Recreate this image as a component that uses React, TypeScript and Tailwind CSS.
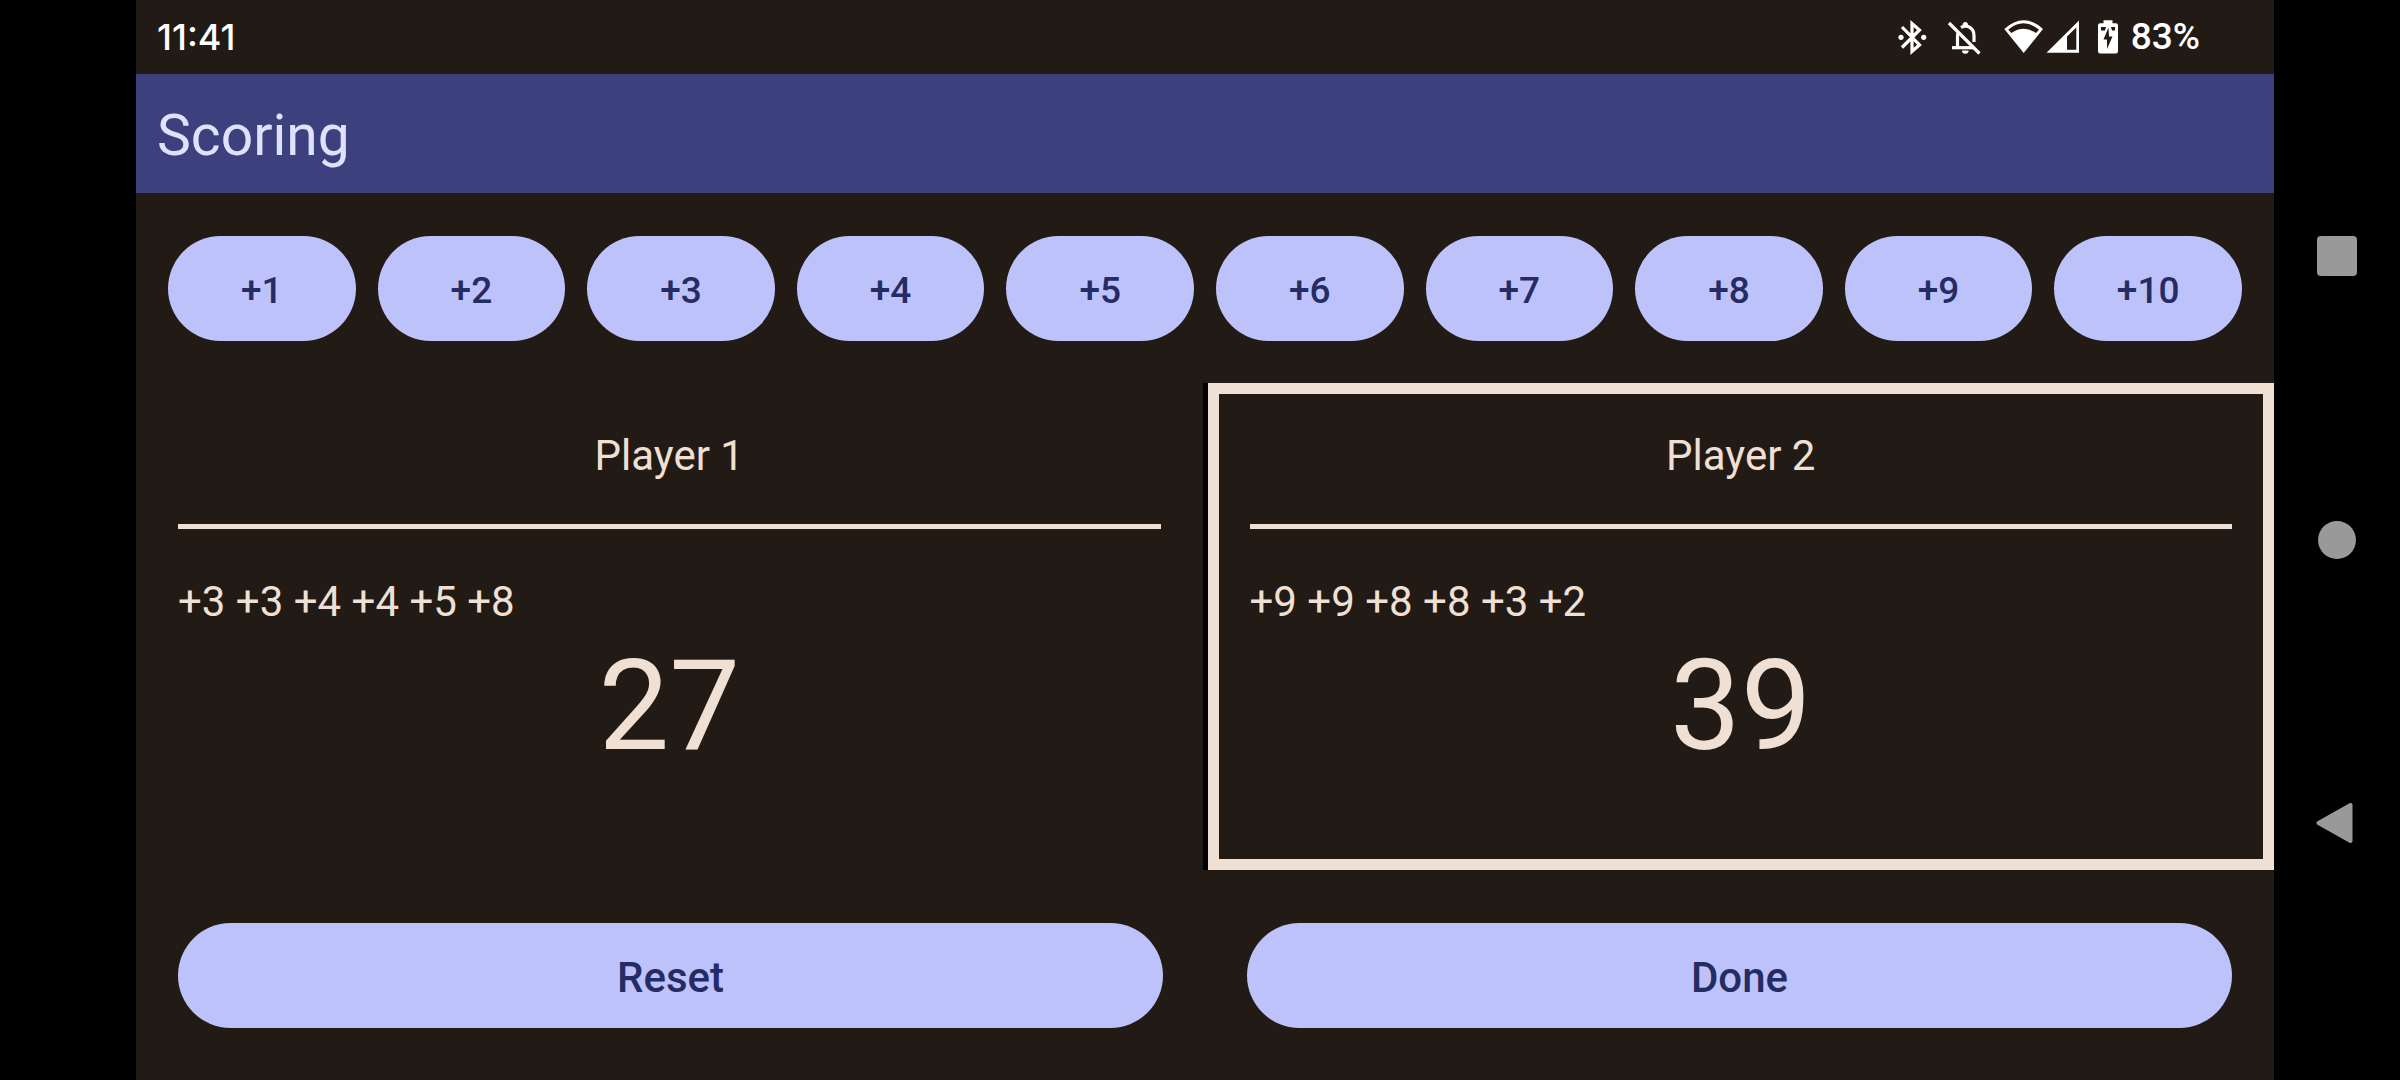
const increments = [1, 2, 3, 4, 5, 6, 7, 8, 9, 10];

const players = [
  { name: "Player 1", history: [3, 3, 4, 4, 5, 8], total: 27, active: false },
  { name: "Player 2", history: [9, 9, 8, 8, 3, 2], total: 39, active: true },
];

function BluetoothIcon() {
  return (
    <svg width="34" height="38" viewBox="0 0 34 38" fill="none" aria-hidden="true">
      <path d="M6 9 23.5 26.8 16 33.5V5.5L23.5 12 6 29.5" stroke="#fff" strokeWidth="3.2" />
      <circle cx="5" cy="19.3" r="2.6" fill="#fff" />
      <circle cx="27.7" cy="19.3" r="2.6" fill="#fff" />
    </svg>
  );
}

function BellOffIcon() {
  return (
    <svg width="36" height="38" viewBox="0 0 36 38" fill="none" aria-hidden="true">
      <g stroke="#fff" strokeWidth="3.2">
        <path d="M3 5 33.5 35.5" />
        <path d="M6 29.7H27" />
        <path d="M11.5 29V18Q11.5 15.5 12.5 14" />
        <path d="M15 9.5C21 6 28 10 28 17.5V24" />
      </g>
      <circle cx="19.3" cy="6.5" r="2.6" fill="#fff" />
      <path d="M16 32.5h6.6a3.3 3.3 0 0 1-6.6 0z" fill="#fff" />
    </svg>
  );
}

function WifiIcon() {
  return (
    <svg width="43" height="38" viewBox="0 0 43 38" aria-hidden="true">
      <path
        fill="#fff"
        fillRule="evenodd"
        d="M2.3 11Q21.7-6.5 41 11L21.7 35ZM6.3 11.7 9.3 15Q21.7 6.4 34 15L37 11.7Q21.7-1 6.3 11.7Z"
      />
    </svg>
  );
}

function SignalIcon() {
  return (
    <svg width="36" height="38" viewBox="0 0 36 38" aria-hidden="true">
      <path
        fill="#fff"
        fillRule="evenodd"
        d="M1.5 34.7H34V2.5ZM22 31.8V18.5L31.3 9.5V31.8Z"
      />
    </svg>
  );
}

function BatteryIcon() {
  return (
    <svg width="22" height="38" viewBox="0 0 22 38" aria-hidden="true">
      <path
        fill="#fff"
        d="M6.5 2.3h9v3H19a2 2 0 0 1 2 2v26.2a2 2 0 0 1-2 2H3a2 2 0 0 1-2-2V7.3a2 2 0 0 1 2-2h3.5z"
      />
      <path fill="#221a14" d="M11.5 9.5 6.5 21.5H10V31L15.5 18.5H12ZM4 9h5l-1 3.5H4ZM14 9h4v3.5h-3Z" />
    </svg>
  );
}

export default function App() {
  return (
    <div className="flex min-h-screen bg-black font-['Roboto',sans-serif]">
      <div className="ml-[136px] flex flex-1 flex-col bg-[#221a14]">
        <div className="flex h-[74px] items-center justify-between pr-[74px] pl-[21px] text-[36px] font-medium text-white">
          <time className="font-['Inter',sans-serif]">11:41</time>
          <div className="flex items-center">
            <BluetoothIcon />
            <span className="w-4" />
            <BellOffIcon />
            <span className="w-5" />
            <WifiIcon />
            <SignalIcon />
            <span className="w-4" />
            <BatteryIcon />
            <span className="ml-3 text-[37px]">83%</span>
          </div>
        </div>

        <header className="flex h-[119px] items-center bg-[#3c417d] px-[21px] pt-1">
          <h1 className="text-[57px] leading-[74px] text-[#e0e0ff]">Scoring</h1>
        </header>

        <main className="flex flex-1 flex-col">
          <div className="flex gap-[22px] px-8 pt-[43px] pb-[42px]">
            {increments.map((n) => (
              <button
                key={n}
                type="button"
                className="h-[105px] flex-1 rounded-full bg-[#bdc2fb] pt-1 text-[37px] font-medium text-[#252b63]"
              >
                +{n}
              </button>
            ))}
          </div>

          <div className="flex gap-[5px] bg-black text-[#f0e0d4]">
            {players.map((p) => (
              <section
                key={p.name}
                className={
                  p.active
                    ? "flex h-[487px] flex-1 flex-col border-[11px] border-[#f0e0d4] bg-[#221a14] px-[31px] pt-[30px]"
                    : "flex h-[487px] flex-1 flex-col border-[11px] border-[#221a14] bg-[#221a14] px-[31px] pt-[30px]"
                }
              >
                <h2 className="text-center text-[42px] leading-[63px]">{p.name}</h2>
                <hr className="mt-[37px] border-t-[5px] border-[#f0e0d4]" />
                <p className="mt-[41px] text-[42px] leading-[63px]">
                  {p.history.map((h) => `+${h}`).join(" ")}
                </p>
                <p className="text-center text-[126px] leading-[146px]">{p.total}</p>
              </section>
            ))}
          </div>

          <div className="flex gap-[84px] px-[42px] pt-[53px] pb-[52px]">
            {["Reset", "Done"].map((label) => (
              <button
                key={label}
                type="button"
                className="h-[105px] flex-1 rounded-full bg-[#bdc2fb] pt-1 text-[42px] font-medium text-[#252b63]"
              >
                {label}
              </button>
            ))}
          </div>
        </main>
      </div>

      <nav className="flex w-[126px] flex-col items-center justify-center gap-[242px]">
        <button type="button" aria-label="Overview" className="flex size-[42px] items-center justify-center">
          <span className="size-10 rounded-[4px] bg-[#999999]" />
        </button>
        <button type="button" aria-label="Home" className="flex size-[42px] items-center justify-center">
          <span className="size-[38px] rounded-full bg-[#999999]" />
        </button>
        <button type="button" aria-label="Back" className="flex size-[42px] items-center justify-center">
          <svg width="42" height="42" viewBox="0 0 42 42" aria-hidden="true">
            <path
              d="M2.5 20 34.5 2V38Z"
              fill="#999999"
              stroke="#999999"
              strokeWidth="4"
              strokeLinejoin="round"
            />
          </svg>
        </button>
      </nav>
    </div>
  );
}
